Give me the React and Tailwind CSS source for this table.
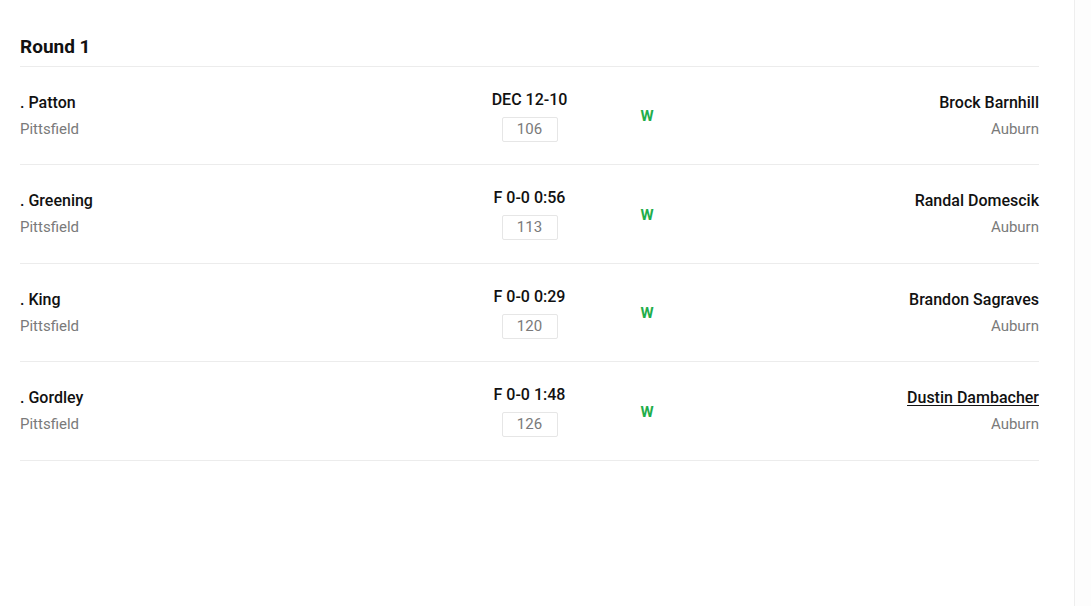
const bouts = [
  { left: '. Patton', result: 'DEC 12-10', weight: 106, right: 'Brock Barnhill' },
  { left: '. Greening', result: 'F 0-0 0:56', weight: 113, right: 'Randal Domescik' },
  { left: '. King', result: 'F 0-0 0:29', weight: 120, right: 'Brandon Sagraves' },
  { left: '. Gordley', result: 'F 0-0 1:48', weight: 126, right: 'Dustin Dambacher', link: true },
]

function BoutRow({ bout, tall }) {
  return (
    <div className={'grid grid-cols-[1fr_112px_1fr] items-center border-b border-[#ececec] ' + (tall ? 'h-[99px]' : 'h-[98px]')}>
      <div>
        <p className="text-[16px] font-medium leading-5 text-[#111]">{bout.left}</p>
        <p className="mt-[6px] text-[15px] leading-5 text-[#7a7a7a]">Pittsfield</p>
      </div>
      <div className="flex flex-col items-center">
        <p className="text-[16px] font-medium leading-5 text-[#111]">{bout.result}</p>
        <div className="mt-[7px] flex h-[25px] w-[56px] items-center justify-center rounded-[2px] border border-[#e6e6e6] text-[15px] text-[#7a7a7a]">
          {bout.weight}
        </div>
      </div>
      <div className="flex items-center justify-between pl-[55px]">
        <span className="translate-y-[1px] text-[15px] font-bold text-[#1fae4b]">W</span>
        <div className="text-right">
          <p className={'text-[16px] font-medium leading-5 text-[#111]' + (bout.link ? ' underline underline-offset-2' : '')}>
            {bout.right}
          </p>
          <p className="mt-[6px] text-[15px] leading-5 text-[#7a7a7a]">Auburn</p>
        </div>
      </div>
    </div>
  )
}

export default function App() {
  return (
    <div className="flex h-[606px] w-full bg-[#fdfdfd]" style={{ fontFamily: 'Roboto, "Noto Sans", sans-serif' }}>
      <div className="w-[1075px] border-r border-[#eeeeee] bg-white pl-5 pr-[35px] pt-[35px]">
        <h2 className="border-b border-[#ececec] pb-[7px] text-[19px] font-bold leading-6 text-[#111]">Round 1</h2>
        {bouts.map((b, i) => (
          <BoutRow key={b.weight} bout={b} tall={i % 2 === 1} />
        ))}
      </div>
    </div>
  )
}
